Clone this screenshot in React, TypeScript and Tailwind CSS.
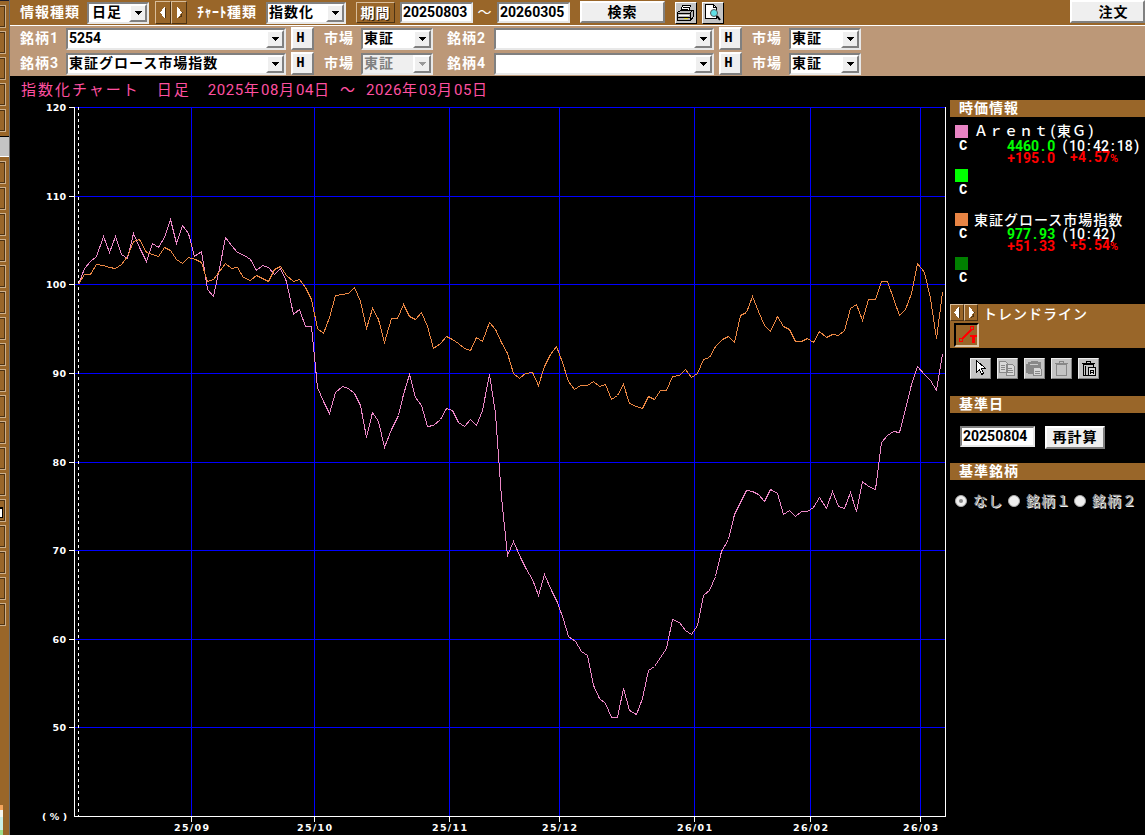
import { ReactNode } from "react";
import clsx from "clsx";

const PINK =
  "78,284 84,268 90,261 96,256 103,236 109,252 115,236 121,254 127,258 133,233 139,247 146,261 152,243 158,247 164,237 170,219 176,243 182,225 188,233 194,256 201,251 207,289 213,296 219,268 225,237 231,245 237,252 244,255 250,259 256,270 262,265 268,267 274,274 280,268 286,281 293,314 299,309 305,326 311,326 317,387 323,401 329,413 335,392 342,386 348,388 354,393 360,405 366,437 372,412 378,421 384,447 391,429 398,415 403,394 409,374 415,397 421,405 427,426 433,425 440,419 446,408 452,410 458,422 464,426 470,419 476,425 482,410 489,374 495,413 501,497 507,555 513,541 520,557 526,569 532,579 538,595 544,574 551,590 557,602 563,619 568,636 575,641 581,651 587,655 593,685 599,698 605,703 611,717 617,717 623,688 629,710 636,714 642,698 648,670 654,666 660,657 666,648 672,619 679,622 685,630 691,634 697,625 703,595 709,590 715,576 721,551 728,539 734,514 746,490 752,491 758,494 764,501 770,489 777,493 783,514 789,510 795,516 801,511 807,511 813,507 819,497 826,508 832,491 838,506 844,508 850,492 856,511 862,481 868,486 875,489 881,442 887,435 893,431 899,432 905,409 911,384 917,366 924,374 930,380 936,390 942,354";

const ORANGE =
  "78,284 84,274 90,274 96,264 103,265 109,267 115,268 121,264 127,256 133,241 139,239 146,252 152,254 158,256 164,247 170,250 176,259 182,263 188,257 195,259 201,262 207,281 213,279 219,271 225,263 231,268 237,267 243,277 250,280 256,275 262,278 268,281 274,269 280,266 286,275 293,281 299,279 305,287 311,299 317,328 323,333 329,317 335,295 342,294 348,293 354,287 360,301 366,328 372,308 378,319 384,342 391,318 397,318 403,304 409,316 415,319 421,312 427,326 433,348 440,343 446,336 452,339 458,343 464,348 470,350 476,337 482,341 489,322 495,329 501,342 507,353 513,373 519,378 525,373 532,372 538,385 544,366 550,354 556,346 562,362 568,381 574,389 580,385 587,385 593,381 599,386 605,384 611,399 617,395 623,384 629,403 636,406 642,408 648,396 654,399 660,390 666,390 672,376 679,375 685,369 691,377 697,373 703,359 709,357 715,346 722,339 728,336 734,342 740,315 746,312 752,296 758,311 764,325 770,331 777,316 783,326 789,329 795,341 801,341 807,338 813,342 819,331 826,337 832,334 838,335 844,330 850,308 856,304 862,320 868,299 875,299 881,281 887,281 893,298 899,315 905,309 911,293 917,263 924,272 930,298 936,338 942,292";

const Y_AXIS: [string, number][] = [
  ["120", 107],
  ["110", 196],
  ["100", 284],
  ["90", 373],
  ["80", 462],
  ["70", 550],
  ["60", 639],
  ["50", 727],
];

const X_AXIS: [string, number][] = [
  ["25/09", 191],
  ["25/10", 314],
  ["25/11", 449],
  ["25/12", 559],
  ["26/01", 694],
  ["26/02", 810],
  ["26/03", 920],
];

const JP = "font-['Noto_Sans_CJK_JP',sans-serif]";
const MONO = "font-['Liberation_Mono',monospace]";
const DIGITS = "font-[Roboto,'Noto_Sans_CJK_JP',sans-serif]";
const SUNKEN =
  "border-2 border-t-[#808080] border-l-[#808080] border-r-[#e8e8e8] border-b-[#e8e8e8]";
const RAISED =
  "border-2 border-t-white border-l-white border-r-[#808080] border-b-[#808080] bg-[#efefef]";

function Label({ children, className }: { children: ReactNode; className?: string }) {
  return (
    <span className={clsx("block shrink-0 whitespace-nowrap text-[14px] tracking-[1px] text-white", JP, className)}>
      {children}
    </span>
  );
}

// half-width run, 8px per character: digits are 8px already, punctuation gets its own cell
function Half({ children, className }: { children?: string; className?: string }) {
  const parts = (children ?? "").split(/([.:()+%])/).filter(Boolean);
  return (
    <span className={clsx("whitespace-pre text-[14px] tracking-normal", DIGITS, className)}>
      {parts.map((p, i) =>
        /[.:()+]/.test(p) ? (
          <span key={i} className="inline-block w-2 text-center">{p}</span>
        ) : p === "%" ? (
          <span key={i} className="inline-block w-2 text-[11px]">{p}</span>
        ) : (
          p
        )
      )}
    </span>
  );
}

function Select({ children, className, disabled }: { children?: ReactNode; className?: string; disabled?: boolean }) {
  return (
    <div className={clsx("flex h-[22px] shrink-0 items-stretch justify-between", SUNKEN, disabled ? "bg-[#efefef] text-[#808080]" : "bg-white text-black", className)}>
      <span className={clsx("block whitespace-nowrap pl-px text-[14px] leading-[15px] font-bold tracking-[1px]", JP)}>
        {children}
      </span>
      <span className="flex w-[18px] shrink-0 items-center justify-center border-2 border-t-white border-l-white border-r-[#808080] border-b-[#808080] bg-[#efefef]">
        <svg width="7" height="4" shapeRendering="crispEdges">
          <path d="M0 0h7v1h-1v1h-1v1h-1v1h-1v-1h-1v-1h-1v-1h-1z" fill={disabled ? "#999" : "#000"} />
        </svg>
      </span>
    </div>
  );
}

function Spinner({ size }: { size: "lg" | "sm" }) {
  const cell = clsx(
    "flex items-center justify-center border border-t-[#d9bd9a] border-l-[#d9bd9a] border-r-[#4d3314] border-b-[#4d3314] bg-[#996629]",
    size === "lg" ? "h-[23px] w-4" : "h-[17px] w-[14px]"
  );
  return (
    <div className="flex shrink-0">
      <span className={cell}>
        <svg width="7" height="11" shapeRendering="crispEdges">
          <path d="M5 0v11h-1v-1h-1v-1h-1v-2h-1v-1h-1v-1h1v-1h1v-2h1v-1h1v-1z" fill="#fff" />
          <path d="M5 1h1v10h-1z" fill="#4d3314" />
        </svg>
      </span>
      <span className={cell}>
        <svg width="7" height="11" shapeRendering="crispEdges">
          <path d="M2 11h1v-1h1v-1h1v-2h1v-1h1v-1h-1v5z" fill="#4d3314" />
          <path d="M1 0v11h1v-1h1v-1h1v-2h1v-1h1v-1h-1v-1h-1v-2h-1v-1h-1v-1z" fill="#fff" />
        </svg>
      </span>
    </div>
  );
}

function DateInput({ children, className }: { children: string; className?: string }) {
  return (
    <div className={clsx("flex h-[21px] shrink-0 items-start bg-white pl-px text-black", SUNKEN, className)}>
      <Half className="leading-[16px] font-bold">{children}</Half>
    </div>
  );
}

function Button({ children, className }: { children: ReactNode; className?: string }) {
  return (
    <button className={clsx("flex shrink-0 items-center justify-center text-[14px] leading-none font-bold tracking-[1px] text-black", JP, RAISED, className)}>
      {children}
    </button>
  );
}

function HButton({ className }: { className?: string }) {
  return (
    <button className={clsx("flex h-[23px] w-[23px] shrink-0 items-center justify-center pb-px pr-1 text-[14px] leading-none font-bold text-black", MONO, RAISED, className)}>
      H
    </button>
  );
}

function SymbolRow({ left, right, code, market }: { left: string; right: string; code: ReactNode; market?: boolean }) {
  return (
    <div className="flex h-[25px] items-start pl-[10px]">
      <Label className="mt-px w-[46px] leading-5 font-bold">
        銘柄<Half>{left}</Half>
      </Label>
      <Select className="mt-[2px] w-[220px]">{code}</Select>
      <HButton className="ml-[5px] mt-px" />
      <Label className="ml-[10px] mt-px w-[37px] leading-5 font-bold">市場</Label>
      <Select className="mt-[2px] w-[72px]" disabled={market}>東証</Select>
      <Label className="ml-[14px] mt-px w-[47px] leading-5 font-bold">
        銘柄<Half>{right}</Half>
      </Label>
      <Select className="mt-[2px] w-[220px]" />
      <HButton className="ml-[5px] mt-px" />
      <Label className="ml-[10px] mt-px w-[37px] leading-5 font-bold">市場</Label>
      <Select className="mt-[2px] w-[72px]">東証</Select>
    </div>
  );
}

function SideStrip() {
  const slots = Array.from({ length: 24 }, (_, i) => i);
  return (
    <aside className="flex h-[835px] w-[10px] shrink-0 flex-col overflow-hidden border-r border-[#6b6b6b] bg-[#996629]">
      <div className="h-px shrink-0 bg-[#1c1c2a]" />
      <div className="h-[4px] shrink-0" />
      {slots.map((i) =>
        i === 5 ? (
          <div key={i} className="mb-1 mt-px h-[21px] shrink-0 border-t border-b border-t-black border-b-white bg-[#c4c4c4]" />
        ) : (
          <div key={i} className="mb-[3px] h-[23px] w-[6px] shrink-0 border border-l-0 border-[#cdb08c]">
            <div className="h-[21px] border border-l-0 border-[#4d3314]">
              {i === 19 && <div className="mt-[6px] h-[11px] w-[3px] border border-l-0 border-t-2 border-black bg-white" />}
            </div>
          </div>
        )
      )}
      <div className="mt-auto flex h-[30px] w-[3px] shrink-0 flex-col">
        <div className="h-[5px] bg-[#f5a55c]" />
        <div className="h-[7px] bg-[#f6f6ee]" />
        <div className="h-[13px] bg-[#c9efe9]" />
        <div className="h-[5px] bg-[#9bdc8c]" />
      </div>
    </aside>
  );
}

function Toolbar() {
  return (
    <div className="flex h-[25px] items-start bg-[#996629] pl-[10px]">
      <Label className="mt-px w-[67px] leading-[21px] font-bold">情報種類</Label>
      <Select className="mt-[2px] w-[62px]">
        <span className="pl-[2px]">日足</span>
      </Select>
      <div className="ml-[6px] mt-px">
        <Spinner size="lg" />
      </div>
      <Label className="ml-[10px] mt-px w-[69px] leading-[21px] font-bold">
        <span className="tracking-[0.5px]">ﾁｬｰﾄ</span>種類
      </Label>
      <Select className="mt-[2px] w-[80px]">指数化</Select>
      <div className={clsx("ml-[10px] mt-[2px] flex h-[21px] w-[39px] shrink-0 items-center justify-center border border-t-[#d9bd9a] border-l-[#d9bd9a] border-r-[#4d3314] border-b-[#4d3314] pb-[2px] text-[14px] leading-none font-bold tracking-[1px] text-white [text-shadow:1px_1px_0_#33220d]", JP)}>
        期間
      </div>
      <DateInput className="ml-[5px] mt-[2px] w-[73px]">20250803</DateInput>
      <Label className="mt-px w-6 text-center leading-[21px]">～</Label>
      <DateInput className="mt-[2px] w-[73px]">20260305</DateInput>
      <Button className="ml-[10px] mt-px h-[22px] w-[85px] pb-[3px]">検索</Button>
      <div className="ml-[10px] mt-[2px] h-[22px] w-[22px] shrink-0 border border-t-white border-l-white border-r-black border-b-black bg-[#c4c4c4]">
        <svg width="20" height="20" viewBox="0 0 20 20" shapeRendering="crispEdges">
          <path d="M6.500 2.500h8l-2 6H4.500z" fill="#fff" stroke="#000" />
          <path d="M7 4.500h6M6 6.500h6" stroke="#000" />
          <path d="M1.500 9.500l3-2h13v6l-3 4h-13z" fill="#b5b5b5" stroke="#000" />
          <path d="M2 10.500h12v7M2 14.500h12M14 10l3-3" stroke="#000" fill="none" />
          <path d="M3 12h10v1H3z" fill="#fff" />
          <path d="M8 15h4v1H8z" fill="#e5dc20" />
        </svg>
      </div>
      <div className="ml-[5px] mt-[2px] h-[22px] w-[22px] shrink-0 border border-t-white border-l-white border-r-black border-b-black bg-[#c4c4c4]">
        <svg width="20" height="20" viewBox="0 0 20 20">
          <path d="M2.500 1.500h8l3 3v11h-11z" fill="#fff" stroke="#000" shapeRendering="crispEdges" />
          <path d="M10.500 1.500v3h3" fill="none" stroke="#000" shapeRendering="crispEdges" />
          <circle cx="11" cy="10" r="3.500" fill="#5fe0e6" stroke="#555" />
          <path d="M14 13l3 4" stroke="#000" strokeWidth="2" />
        </svg>
      </div>
      <Button className="ml-auto h-[23px] w-[75px] pb-[2px] pl-3">注文</Button>
    </div>
  );
}

function Chart() {
  return (
    <svg width="939" height="735" viewBox="11 100 939 735" className="block">
      <g stroke="#00f" shapeRendering="crispEdges">
        {Y_AXIS.map(([t, y]) => (
          <path key={t} d={`M75 ${y + 0.5}H945`} />
        ))}
        {X_AXIS.map(([t, x]) => (
          <path key={t} d={`M${x + 0.5} 107V816`} />
        ))}
      </g>
      <g stroke="#fff" fill="none" shapeRendering="crispEdges">
        <path d="M74.500 107V816.500H945.500V107" />
        <path d="M78.500 107V816" strokeDasharray="3 3" />
        {Y_AXIS.map(([t, y]) => (
          <path key={t} d={`M69 ${y + 0.5}h6`} />
        ))}
        {X_AXIS.map(([t, x]) => (
          <path key={t} d={`M${x + 0.5} 817v5`} />
        ))}
      </g>
      <g fill="none" shapeRendering="crispEdges" transform="translate(.5 .5)">
        <polyline points={PINK} stroke="#ec88c8" />
        <polyline points={ORANGE} stroke="#ec8844" />
      </g>
      <g fill="#fff" fontFamily="'DejaVu Sans', sans-serif" fontWeight="bold" fontSize="9.500">
        {Y_AXIS.map(([t, y]) => (
          <text key={t} x={66 - t.length * 6.7} y={y + 4} textLength={t.length * 6.7}>
            {t}
          </text>
        ))}
        <text x="42" y="820" textLength="25">(%)</text>
        {X_AXIS.map(([t, x]) => (
          <text key={t} x={x - 17} y="831" textLength="35">
            {t}
          </text>
        ))}
      </g>
    </svg>
  );
}

function PanelHead({ children }: { children: ReactNode }) {
  return (
    <div className="h-[17px] bg-[#996629] pl-[9px]">
      <Label className="leading-[15px] font-bold">{children}</Label>
    </div>
  );
}

function Quote({ swatch, name, price, time, change, rate }: { swatch: string; name?: ReactNode; price?: string; time?: string; change?: string; rate?: string }) {
  return (
    <div className="h-11 pl-[5px]">
      <div className="flex h-[14px] items-center">
        <span className={clsx("h-[13px] w-[13px] shrink-0", swatch)} />
        <Label className="ml-[6px] leading-[13px] font-medium">{name}</Label>
      </div>
      <div className="mt-[2px] flex h-3 items-center pl-1 leading-3 text-white">
        <span className={clsx("w-[48px] text-[14px] font-bold", MONO)}>C</span>
        <Half className="w-[48px] text-right font-bold text-[#0f0]">{price}</Half>
        <Half className="pl-[6px] font-medium">{time}</Half>
      </div>
      <div className="flex h-3 items-center pl-[52px] leading-3 text-[#f00]">
        <Half className="w-[48px] text-right font-bold">{change}</Half>
        <Half className="w-[63px] text-right font-bold">{rate}</Half>
      </div>
    </div>
  );
}

function ToolButton({ children }: { children: ReactNode }) {
  return (
    <button className="h-[21px] w-[21px] border border-t-[#eee] border-l-[#eee] border-r-[#808080] border-b-[#808080] bg-[#c4c4c4]">
      <svg width="19" height="19" viewBox="0 0 19 19" shapeRendering="crispEdges">
        {children}
      </svg>
    </button>
  );
}

function Radio({ children, checked, className }: { children: ReactNode; checked?: boolean; className?: string }) {
  return (
    <label className={clsx("flex shrink-0 items-center", className)}>
      <span className="flex h-3 w-3 shrink-0 items-center justify-center rounded-full border border-[#aaa] bg-[#efefef]">
        {checked && <span className="h-1 w-1 rounded-full bg-[#888]" />}
      </span>
      <span className={clsx("ml-[6px] whitespace-nowrap pb-[2px] text-[14px] leading-[18px] font-medium tracking-[1px] text-[#999] [text-shadow:1px_1px_0_#eee]", JP)}>
        {children}
      </span>
    </label>
  );
}

function SidePanel() {
  return (
    <aside className="w-[195px] shrink-0 pt-6">
      <PanelHead>時価情報</PanelHead>
      <div className="h-[187px] pt-[7px]">
        <Quote
          swatch="bg-[#e884c4]"
          name={<>Ａｒｅｎｔ<Half>(</Half>東Ｇ<Half>)</Half></>}
          price="4460.0"
          time="(10:42:18)"
          change="+195.0"
          rate="+4.57%"
        />
        <Quote swatch="bg-[#00ff00]" />
        <Quote
          swatch="bg-[#e88444]"
          name="東証グロース市場指数"
          price="977.93"
          time="(10:42)"
          change="+51.33"
          rate="+5.54%"
        />
        <Quote swatch="bg-[#008000]" />
      </div>

      <div className="h-[44px] bg-[#996629]">
        <div className="flex h-[19px]">
          <Spinner size="sm" />
          <Label className="ml-[5px] leading-[18px] font-medium">トレンドライン</Label>
        </div>
        <div className="ml-1 h-[24px] w-[25px] border-2 border-t-black border-l-black border-r-[#ddc8aa] border-b-[#ddc8aa]">
          <svg width="21" height="20" viewBox="0 0 21 20" shapeRendering="crispEdges">
            <path d="M6 14l9-9" stroke="#f00" strokeWidth="2" />
            <path d="M3.500 13.500h3v3h-3zM14.500 1.500h3v3h-3z" fill="#996629" stroke="#f00" />
            <path d="M14 10h7v2h-2v6h-3v-6h-2z" fill="#f00" />
          </svg>
        </div>
      </div>

      <div className="flex h-[48px] gap-[6px] pl-5 pt-[10px]">
        <ToolButton>
          <path d="M5.500 1.500v12l3-3 2 5 2-1-2-5h4z" fill="#fff" stroke="#000" />
        </ToolButton>
        <ToolButton>
          <path d="M1.500 2.500h6l2 2v9h-8zM8.500 5.500h6l2 2v9h-8z" fill="#d8d8d8" stroke="#888" />
          <path d="M3 6.500h4M3 8.500h4M3 10.500h4M10 9.500h4M10 11.500h5M10 13.500h5" stroke="#888" />
        </ToolButton>
        <ToolButton>
          <path d="M3 3h3V2h7v1h3v12H3v-1H1V5h2z" fill="#888" />
          <path d="M5 5.500h8" stroke="#ccc" />
          <path d="M8.500 8.500h6l2 2v6h-8z" fill="#d8d8d8" stroke="#888" />
          <path d="M10 12.500h5M10 14.500h5" stroke="#888" />
        </ToolButton>
        <ToolButton>
          <path d="M4.500 5.500h10v11h-10zM3 4.500h13M7.500 4V2.500h4V4" fill="none" stroke="#888" />
        </ToolButton>
        <ToolButton>
          <path d="M4.500 5.500h10v11h-10zM3 4.500h13M7.500 4V2.500h4V4M6.500 7v9" fill="none" stroke="#000" />
          <path d="M9.500 8.500h7v8h-7z" fill="#ddd" stroke="#000" />
          <path d="M11.500 15v-4h3v4M12 13.500h2" fill="none" stroke="#000" />
        </ToolButton>
      </div>

      <PanelHead>基準日</PanelHead>
      <div className="flex h-[50px] gap-[10px] pl-[10px] pt-[13px]">
        <DateInput className="w-[75px]">20250804</DateInput>
        <Button className="h-[23px] w-[60px] pb-[4px]">再計算</Button>
      </div>

      <PanelHead>基準銘柄</PanelHead>
      <div className="flex pl-[5px] pt-[11px]">
        <Radio checked className="w-[53px]">なし</Radio>
        <Radio className="w-[66px]">銘柄１</Radio>
        <Radio>銘柄２</Radio>
      </div>
    </aside>
  );
}

function Num({ children }: { children?: string }) {
  return <span className={clsx("tracking-[0.57px]", DIGITS)}>{children}</span>;
}

export default function App() {
  return (
    <div className="flex h-[835px] w-[1145px] overflow-hidden bg-black">
      <SideStrip />
      <div className="flex w-[1135px] flex-col">
        <Toolbar />
        <div className="h-[51px] border-t border-white bg-[#bc9878]">
          <SymbolRow left="1" right="2" code={<Half>5254</Half>} />
          <SymbolRow left="3" right="4" code="東証グロース市場指数" market />
        </div>
        <div className="flex">
          <div className="w-[940px] shrink-0 pl-px">
            <h1 className={clsx("h-6 whitespace-pre pl-[10px] text-[15px] leading-[25px] tracking-[2px] text-[#ff50a0]", JP)}>
              指数化チャート　日足　<Num>2025</Num>年<Num>08</Num>月<Num>04</Num>日<span className="mx-[9px]">～</span><Num>2026</Num>年<Num>03</Num>月<Num>05</Num>日
            </h1>
            <Chart />
          </div>
          <SidePanel />
        </div>
      </div>
    </div>
  );
}
